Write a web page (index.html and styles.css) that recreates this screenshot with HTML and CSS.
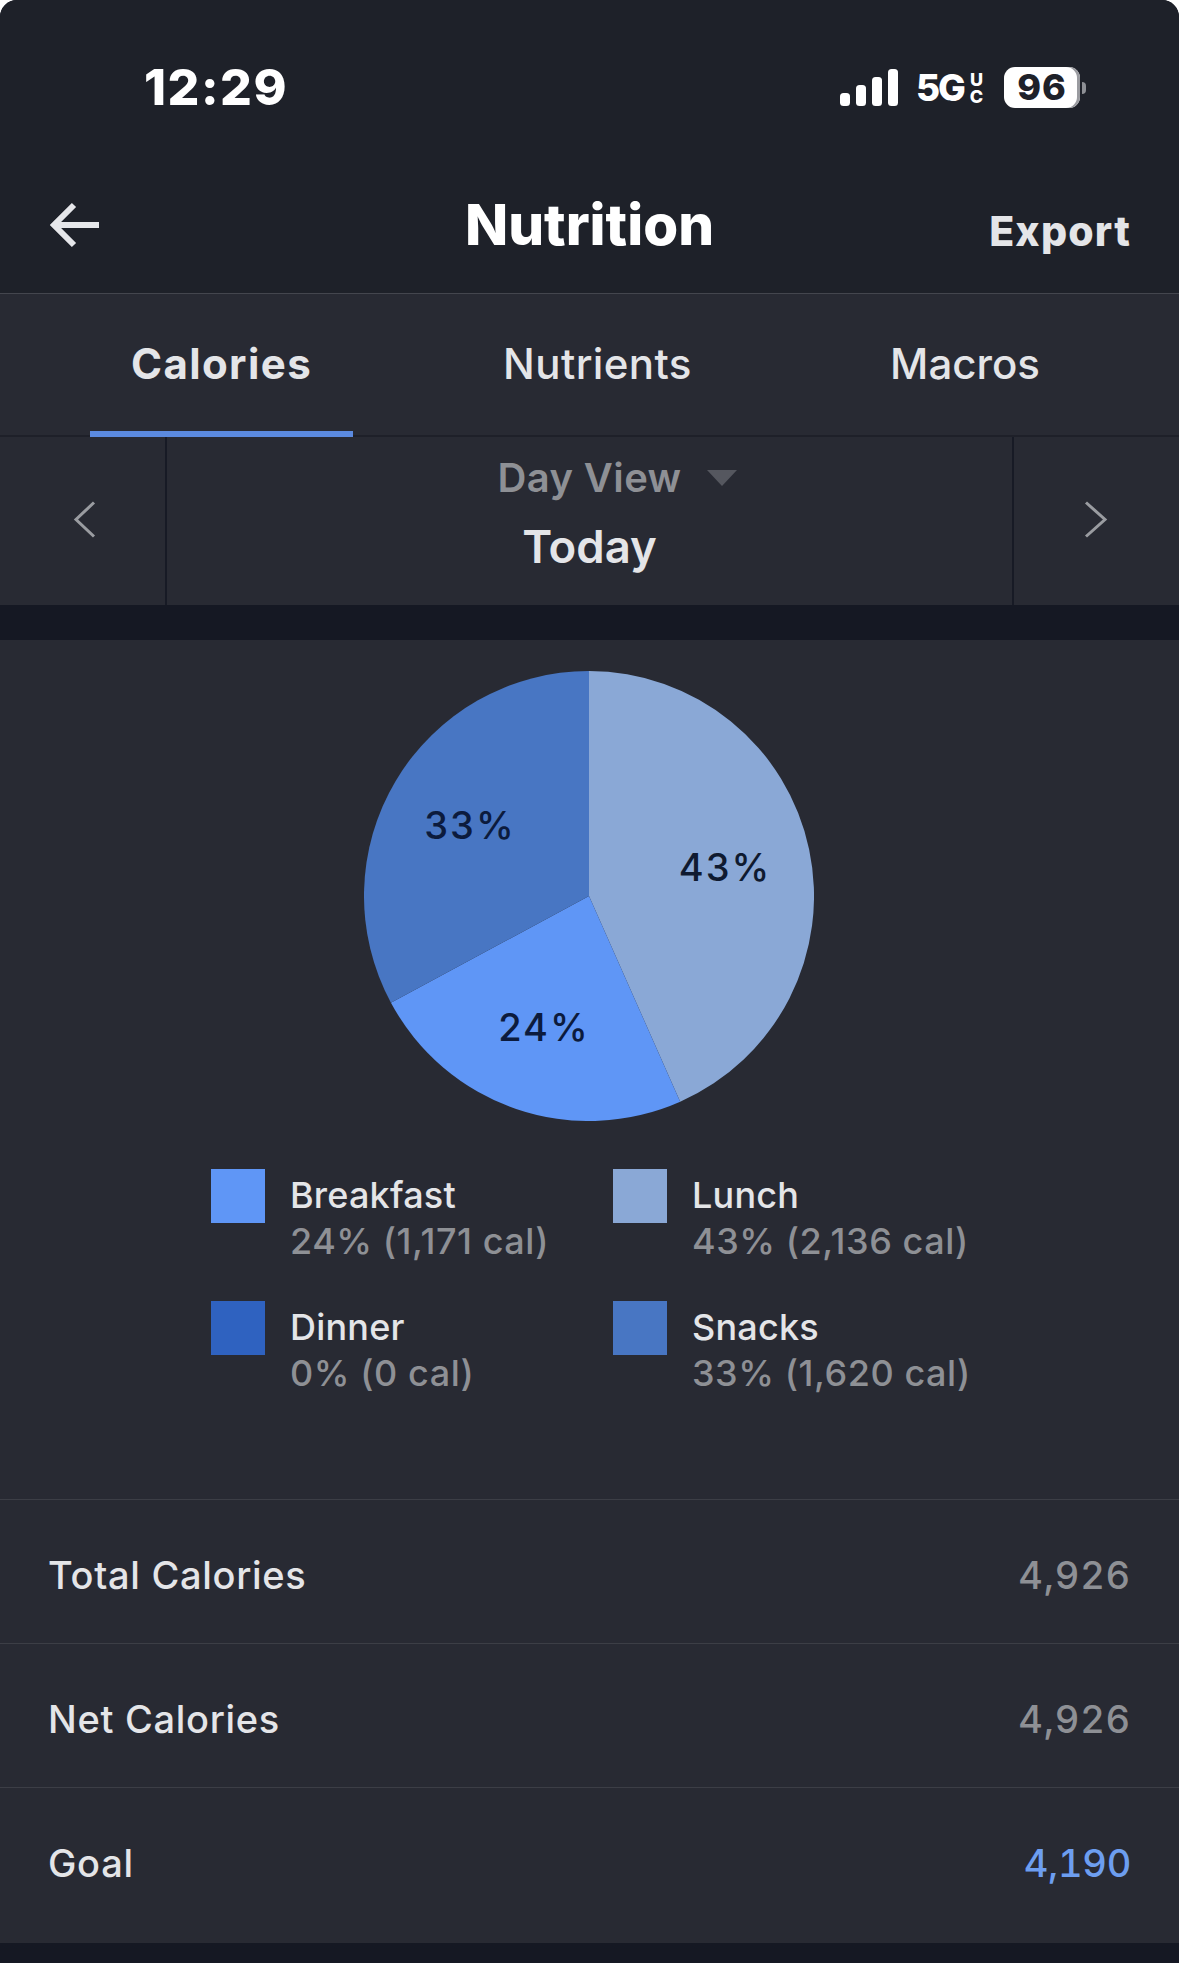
FILE: index.html
```html
<!DOCTYPE html>
<html lang="en">
<head>
<meta charset="utf-8">
<title>Nutrition</title>
<link rel="stylesheet" href="styles.css">
</head>
<body>
<div class="screen">
  <header class="top">
    <div class="status">
      <span class="time">12:29</span>
      <div class="status-right">
        <svg class="signal" width="58" height="37" viewBox="0 0 58 37"><rect x="0" y="24" width="10" height="13" rx="3.5"/><rect x="16" y="16" width="10" height="21" rx="3.5"/><rect x="32" y="8" width="10" height="29" rx="3.5"/><rect x="48" y="0" width="10" height="37" rx="3.5"/></svg>
        <span class="net">5G</span>
        <span class="uc"><span>U</span><span>C</span></span>
        <div class="battery"><span class="battery-body">96</span><span class="battery-cap"></span></div>
      </div>
    </div>
    <div class="nav">
      <svg class="back" width="52" height="50" viewBox="0 0 52 50"><path d="M25 5 L5 25 L25 45 M5 25 H50" fill="none" stroke="#e6e7ea" stroke-width="6"/></svg>
      <h1 class="title">Nutrition</h1>
      <span class="export">Export</span>
    </div>
  </header>
  <nav class="tabs">
    <div class="tab tab-active">Calories</div>
    <div class="tab tab-mid">Nutrients</div>
    <div class="tab tab-last">Macros</div>
  </nav>
  <section class="daybar">
    <div class="arrow-cell"><svg width="24" height="40" viewBox="0 0 24 40"><path d="M21 1.5 L3 18.5 L21 35.5" fill="none" stroke="#9a9ca1" stroke-width="3"/></svg></div>
    <div class="day-center">
      <div class="day-view"><span>Day View</span><span class="caret"></span></div>
      <div class="today">Today</div>
    </div>
    <div class="arrow-cell arrow-right"><svg width="24" height="40" viewBox="0 0 24 40"><path d="M2 1.5 L21 18.5 L2 35.5" fill="none" stroke="#9a9ca1" stroke-width="3"/></svg></div>
  </section>
  <div class="band"></div>
  <main class="panel">
    <div class="chart">
      <svg class="pie" width="450" height="450" viewBox="0 0 450 450">
        <path d="M225 225 L225 0 A225 225 0 0 1 316.2 430.7 Z" fill="#8aa8d6"/>
        <path d="M225 225 L316.2 430.7 A225 225 0 0 1 26.9 331.7 Z" fill="#5f96f6"/>
        <path d="M225 225 L26.9 331.7 A225 225 0 0 1 225 0 Z" fill="#4876c3"/>
        <text class="pie-label" x="361" y="210" text-anchor="middle" fill="#0f1a30">43%</text>
        <text class="pie-label" x="180" y="370" text-anchor="middle" fill="#0c1b3d">24%</text>
        <text class="pie-label" x="106" y="168" text-anchor="middle" fill="#0c1b3d">33%</text>
      </svg>
    </div>
    <div class="legend">
      <div class="legend-item"><span class="swatch sw-breakfast"></span><div class="legend-text"><div class="legend-name">Breakfast</div><div class="legend-val">24% (1,171 cal)</div></div></div>
      <div class="legend-item"><span class="swatch sw-lunch"></span><div class="legend-text"><div class="legend-name">Lunch</div><div class="legend-val">43% (2,136 cal)</div></div></div>
      <div class="legend-item"><span class="swatch sw-dinner"></span><div class="legend-text"><div class="legend-name">Dinner</div><div class="legend-val">0% (0 cal)</div></div></div>
      <div class="legend-item"><span class="swatch sw-snacks"></span><div class="legend-text"><div class="legend-name">Snacks</div><div class="legend-val">33% (1,620 cal)</div></div></div>
    </div>
    <div class="rows">
      <div class="row"><span class="row-label">Total Calories</span><span class="row-val">4,926</span></div>
      <div class="row"><span class="row-label">Net Calories</span><span class="row-val">4,926</span></div>
      <div class="row"><span class="row-label">Goal</span><span class="row-val row-goal">4,190</span></div>
    </div>
  </main>
</div>
</body>
</html>
```
FILE: styles.css
```css
* { box-sizing: border-box; margin: 0; padding: 0; }
html, body { width: 1179px; height: 1963px; background: #fff; overflow: hidden; }
body { font-family: Inter, "Liberation Sans", sans-serif; color: #e4e5e8; }
.screen { width: 1179px; height: 1963px; background: #151823; border-radius: 17px 17px 0 0; overflow: hidden; display: flex; flex-direction: column; }
.top { height: 293px; background: #1e2129; display: flex; flex-direction: column; }
.status { height: 176px; padding: 59px 93px 60px 144px; display: flex; justify-content: space-between; align-items: center; }
.time { font-size: 50px; font-weight: 800; line-height: 57px; color: #fff; letter-spacing: 1.5px; }
.status-right { display: flex; align-items: center; height: 57px; }
.signal { fill: #fff; }
.net { width: 50px; font-size: 37px; font-weight: 800; color: #fff; margin-left: 18px; letter-spacing: -2px; white-space: nowrap; }
.uc { width: 17px; display: flex; flex-direction: column; align-items: center; font-size: 18px; font-weight: 800; line-height: 17px; color: #fff; margin-left: 2px; }
.battery { display: flex; align-items: center; gap: 2px; margin-left: 19px; }
.battery-body { width: 76px; height: 41px; background: #fff; border-radius: 11px; box-shadow: inset -3px 0 0 #9a9ba0; color: #1e2129; font-size: 36px; font-weight: 800; text-align: center; line-height: 41px; letter-spacing: 1px; }
.battery-cap { width: 4px; height: 12px; background: #8e9095; border-radius: 0 6px 6px 0; }
.nav { position: relative; display: flex; align-items: center; justify-content: space-between; padding: 0 48px 0 49px; height: 98px; }
.back { flex: none; }
.title { position: absolute; left: 0; right: 0; text-align: center; font-size: 56.5px; font-weight: 800; color: #fff; line-height: 98px; }
.export { font-size: 41px; font-weight: 800; color: #e4e5e8; margin-top: 11px; letter-spacing: 1.2px; }
.tabs { height: 144px; background: #282a33; border-top: 1px solid #44464e; display: grid; grid-template-columns: 90px 263px 489px 246px; border-bottom: 2px solid #1e2029; }
.tab { font-size: 42px; line-height: 140px; height: 143px; text-align: center; color: #e4e5e8; font-weight: 500; letter-spacing: 0.4px; }
.tab-active { grid-column: 2; font-weight: 700; border-bottom: 6px solid #5b8ae0; letter-spacing: 1.4px; }
.tab-last { letter-spacing: 0; }
.daybar { height: 168px; background: #282a33; display: grid; grid-template-columns: 167px 1fr 167px; }
.arrow-cell { border-right: 2px solid #171a25; display: flex; align-items: center; padding-left: 73px; }
.arrow-right { border-right: 0; border-left: 2px solid #171a25; padding-left: 70px; }
.day-center { display: flex; flex-direction: column; align-items: center; padding-top: 13px; }
.day-view { display: flex; align-items: center; gap: 25px; font-size: 40px; line-height: 55px; color: #8e9095; font-weight: 600; letter-spacing: 0.4px; margin-left: 55px; }
.caret { width: 0; height: 0; border-left: 15px solid transparent; border-right: 15px solid transparent; border-top: 16px solid #55575f; }
.today { font-size: 45.5px; line-height: 64px; font-weight: 600; color: #e4e5e8; margin-top: 10px; }
.band { height: 35px; background: #151823; }
.panel { height: 1303px; background: #282a33; display: flex; flex-direction: column; }
.chart { padding: 31px 1px 0 0; display: flex; justify-content: center; }
.pie { display: block; }
.pie-label { font-family: Inter, "Liberation Sans", sans-serif; font-size: 38px; font-weight: 500; letter-spacing: 2px; }
.legend { margin-top: 48px; padding-left: 211px; display: grid; grid-template-columns: 402px 1fr; row-gap: 78px; }
.legend-item { display: flex; gap: 25px; height: 54px; }
.swatch { width: 54px; height: 54px; flex: none; }
.sw-breakfast { background: #5f96f6; }
.sw-lunch { background: #8aa8d6; }
.sw-dinner { background: #2f62c0; }
.sw-snacks { background: #4876c3; }
.legend-text { margin-top: 3px; }
.legend-name { font-size: 36px; line-height: 46px; font-weight: 500; color: #e4e5e8; letter-spacing: 0.2px; }
.legend-val { font-size: 36px; line-height: 46px; color: #8e9095; font-weight: 500; letter-spacing: 0.55px; white-space: nowrap; }
.rows { margin-top: 144px; flex: 1; }
.row { height: 144px; padding: 6px 48px 0; border-top: 1px solid #3c3e46; display: flex; justify-content: space-between; align-items: center; font-size: 38px; font-weight: 500; }
.row:last-child { height: 156px; padding-top: 0; padding-bottom: 6px; }
.row-label { color: #e4e5e8; letter-spacing: 0.7px; }
.row-val { color: #8e9095; font-variant-numeric: tabular-nums; letter-spacing: 0.8px; }
.row-goal { color: #6d9ef0; letter-spacing: -0.3px; }
```
